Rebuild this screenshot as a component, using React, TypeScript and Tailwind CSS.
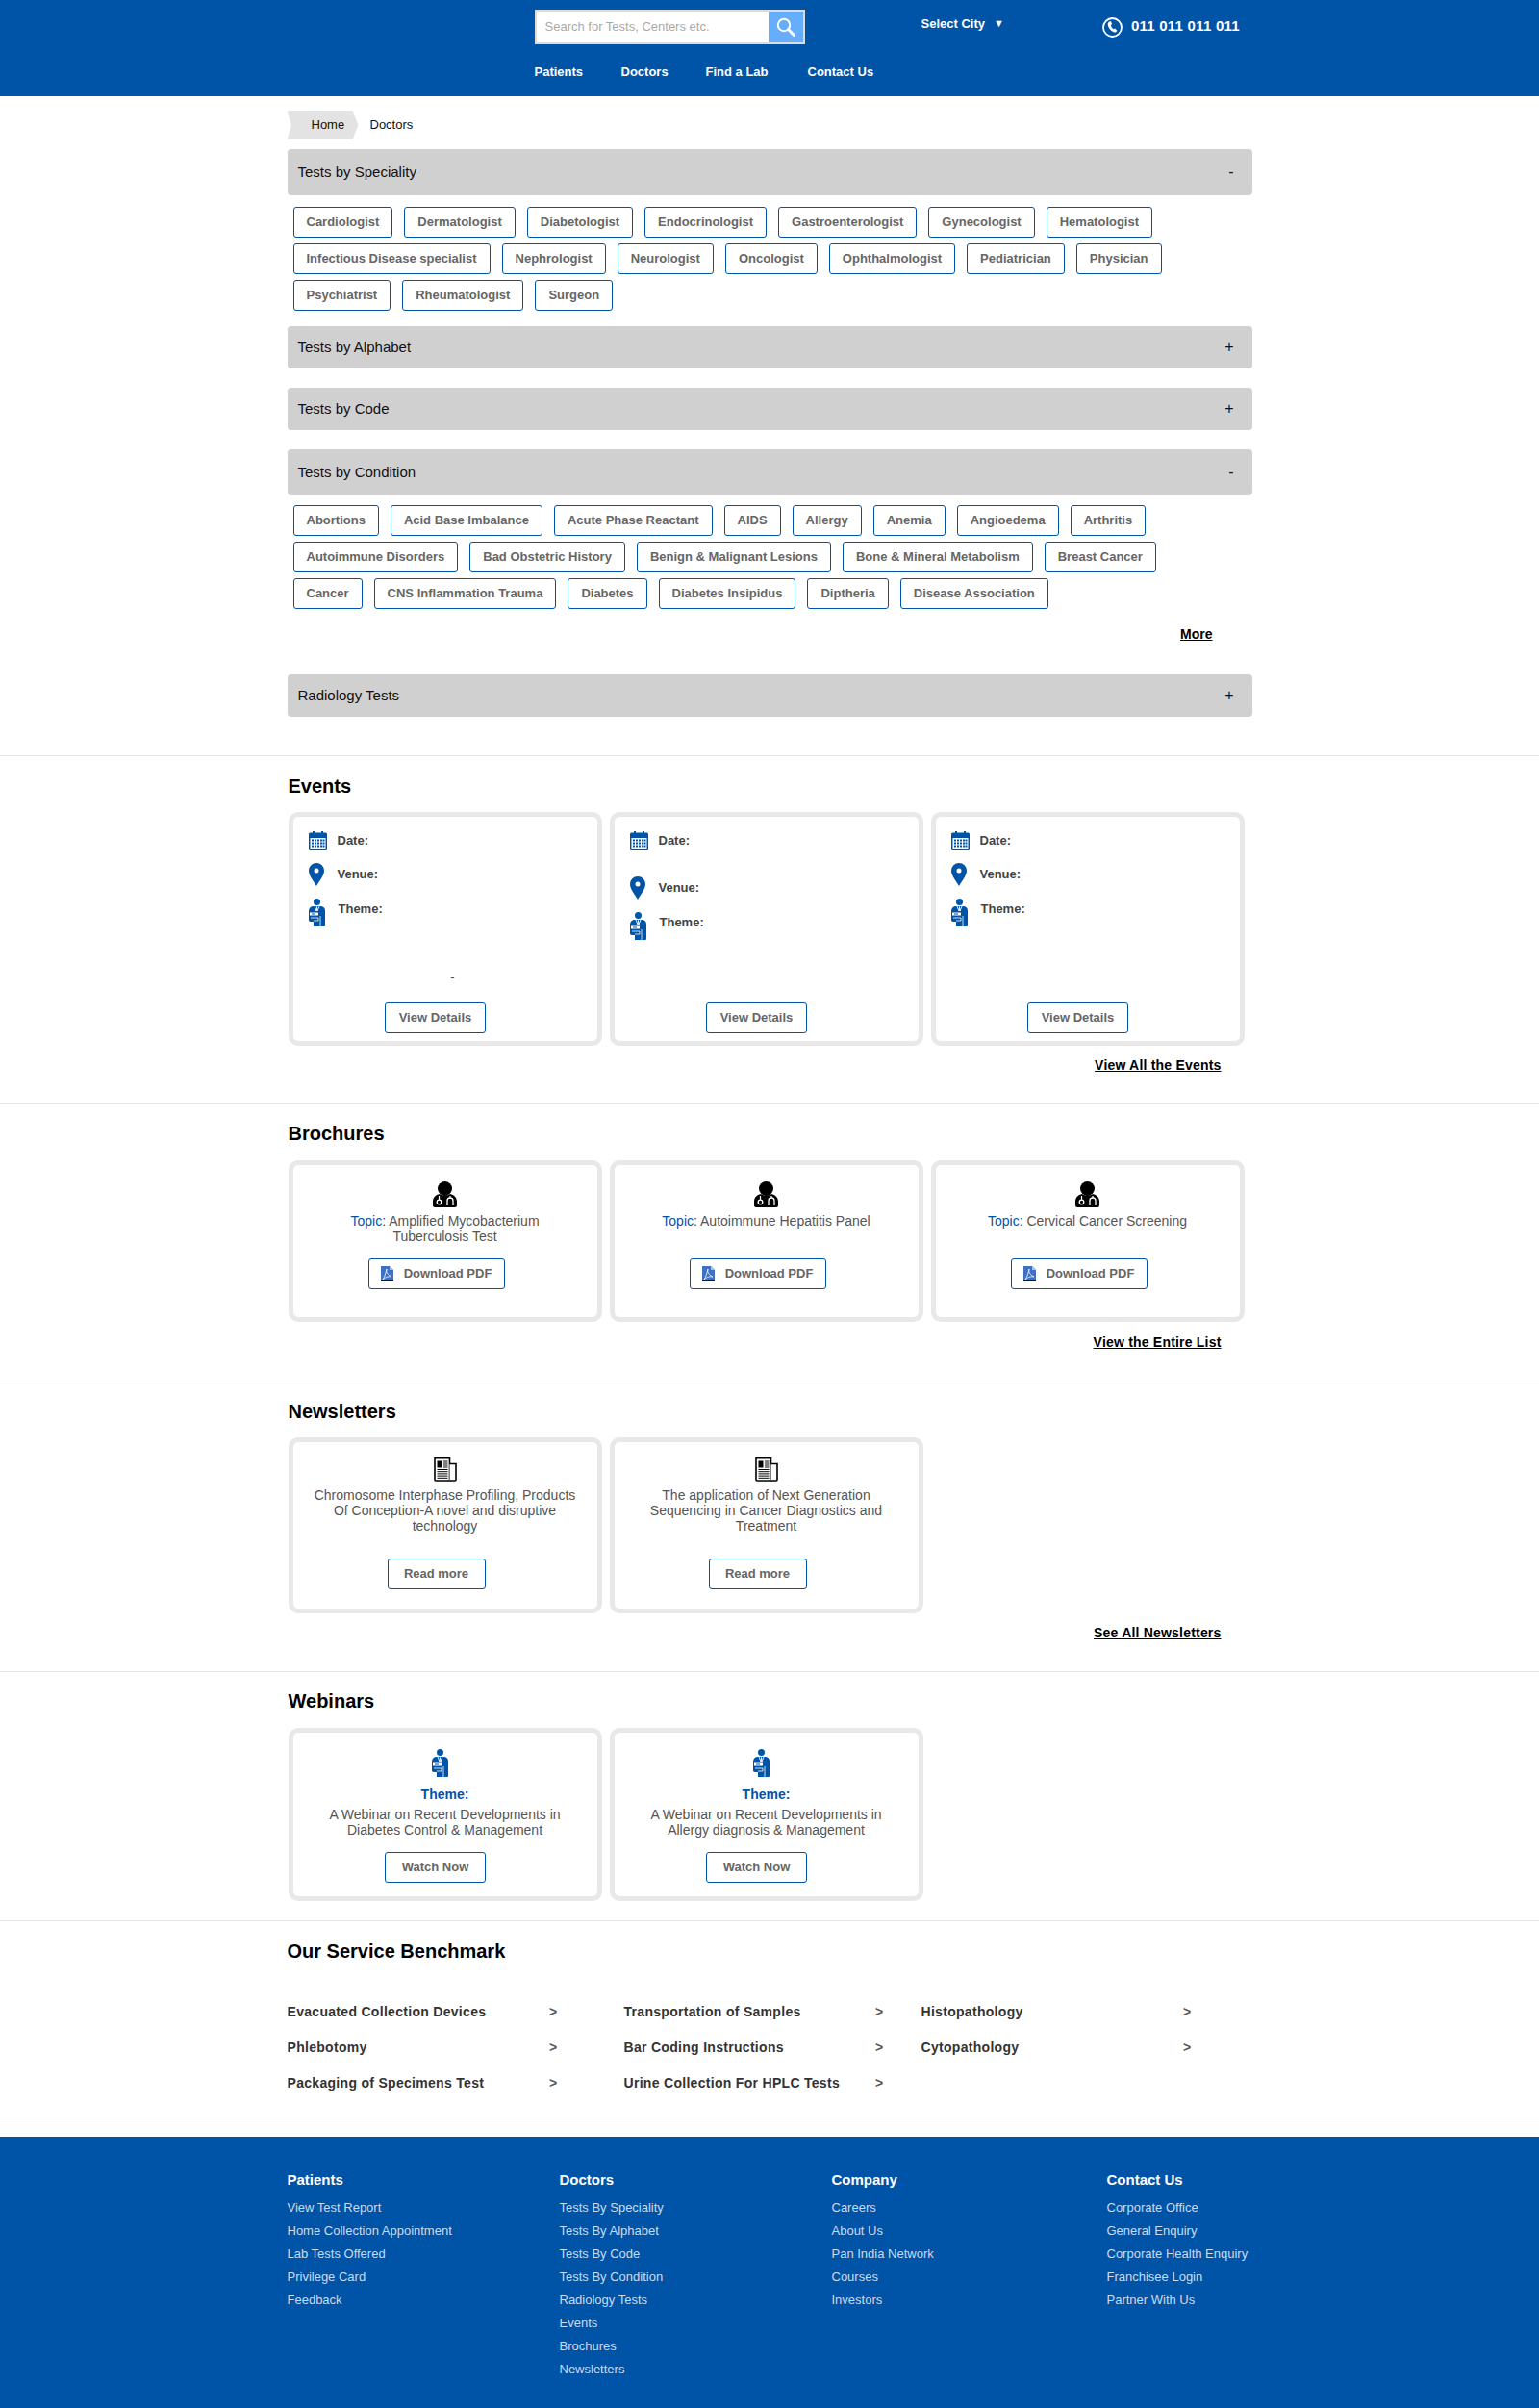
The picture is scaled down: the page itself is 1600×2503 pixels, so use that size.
import React from 'react';

const specialities = [
  ['Cardiologist', 'Dermatologist', 'Diabetologist', 'Endocrinologist', 'Gastroenterologist', 'Gynecologist', 'Hematologist'],
  ['Infectious Disease specialist', 'Nephrologist', 'Neurologist', 'Oncologist', 'Ophthalmologist', 'Pediatrician', 'Physician'],
  ['Psychiatrist', 'Rheumatologist', 'Surgeon'],
];

const conditions = [
  ['Abortions', 'Acid Base Imbalance', 'Acute Phase Reactant', 'AIDS', 'Allergy', 'Anemia', 'Angioedema', 'Arthritis'],
  ['Autoimmune Disorders', 'Bad Obstetric History', 'Benign & Malignant Lesions', 'Bone & Mineral Metabolism', 'Breast Cancer'],
  ['Cancer', 'CNS Inflammation Trauma', 'Diabetes', 'Diabetes Insipidus', 'Diptheria', 'Disease Association'],
];

const benchmark = [
  { cls: 'w-[350px]', row: 'w-[281px]', items: ['Evacuated Collection Devices', 'Phlebotomy', 'Packaging of Specimens Test'] },
  { cls: 'w-[309px]', row: 'w-[270px]', items: ['Transportation of Samples', 'Bar Coding Instructions', 'Urine Collection For HPLC Tests'] },
  { cls: 'w-[320px]', row: 'w-[281px]', items: ['Histopathology', 'Cytopathology'] },
];

const footer = [
  { title: 'Patients', cls: 'w-[283px]', links: ['View Test Report', 'Home Collection Appointment', 'Lab Tests Offered', 'Privilege Card', 'Feedback'] },
  { title: 'Doctors', cls: 'w-[283px]', links: ['Tests By Speciality', 'Tests By Alphabet', 'Tests By Code', 'Tests By Condition', 'Radiology Tests', 'Events', 'Brochures', 'Newsletters'] },
  { title: 'Company', cls: 'w-[286px]', links: ['Careers', 'About Us', 'Pan India Network', 'Courses', 'Investors'] },
  { title: 'Contact Us', cls: 'w-[150px]', links: ['Corporate Office', 'General Enquiry', 'Corporate Health Enquiry', 'Franchisee Login', 'Partner With Us'] },
];

/* Icons */
const MagnifierIcon = () => (
  <svg width="20" height="20" viewBox="0 0 20 20">
    <circle cx="8" cy="8" r="6.200" fill="none" stroke="#fff" strokeWidth="2" />
    <path d="M12.500 12.500L19 19" stroke="#fff" strokeWidth="3" strokeLinecap="round" />
  </svg>
);

const PhoneRingIcon = () => (
  <svg width="21" height="21" viewBox="0 0 21 21" className="shrink-0">
    <circle cx="10.500" cy="10.500" r="9.500" fill="none" stroke="#fff" strokeWidth="1.800" />
    <path d="M7.300 4.500L8.800 4l1.400 3-1.300 1c.3 1.700 1.300 3.300 2.800 4.300l1.400-.9 2.300 2.300-1 1.300c-.6.500-1.300.6-2 .4C8.700 14.300 6.200 11 5.700 7.300c-.1-1.200.5-2.300 1.600-2.800z" fill="#fff" />
  </svg>
);

const CalendarIcon = () => (
  <svg width="19" height="21" viewBox="0 0 19 21" className="shrink-0">
    <path d="M1.500 2.500H4V1h2v1.500h7V1h2v1.500h2.500A1.500 1.500 0 0 1 19 4v15.500a1.500 1.500 0 0 1-1.500 1.500h-16A1.500 1.500 0 0 1 0 19.500V4a1.500 1.500 0 0 1 1.500-1.500z" fill="#0054a8" />
    <rect x="1.500" y="8" width="16" height="11.500" fill="#fff" />
    {[9.5, 12.5, 15.5].map((y) =>
      [3, 6, 9, 12, 14.5].map((x) => <rect key={`${x}-${y}`} x={x} y={y} width="2" height="2" fill="#0054a8" />),
    )}
  </svg>
);

const PinIcon = () => (
  <svg width="16" height="24" viewBox="0 0 16 24" className="shrink-0">
    <path fillRule="evenodd" d="M8 0a8 8 0 0 1 8 8c0 5-5 11-8 16C5 19 0 13 0 8a8 8 0 0 1 8-8zm0 5.500a2.500 2.500 0 1 0 0 5 2.500 2.500 0 0 0 0-5z" fill="#0054a8" />
  </svg>
);

const PersonIcon = () => (
  <svg width="17" height="29" viewBox="0 0 17 29" className="shrink-0">
    <circle cx="8.500" cy="3.500" r="3.500" fill="#0054a8" />
    <path d="M4 8h9c2.500.5 4 2 4 4.500V28a1 1 0 0 1-1 1H5v-5H2c-1.500 0-2-1-2-2v-9c0-3 2-4.500 4-5z" fill="#0054a8" />
    <path d="M6 8l2 5 .5-4.500L9 13l2-5" stroke="#fff" strokeWidth=".9" fill="none" />
    <rect x="1" y="14.500" width="9" height="3" fill="#fff" />
    <rect x="3" y="15.500" width="4" height="1" fill="#0054a8" />
    <path d="M12 18v11" stroke="#fff" strokeWidth=".8" />
    <path d="M2 20h8v3H5" stroke="#fff" strokeWidth=".8" fill="none" />
  </svg>
);

const DoctorIcon = () => (
  <svg width="25" height="27" viewBox="0 0 25 27">
    <circle cx="12.500" cy="7.500" r="7.500" fill="#000" />
    <path d="M7 13c2 2 9 2 11 0 4 1 7 3.500 7 8v4a2 2 0 0 1-2 2H2a2 2 0 0 1-2-2v-4c0-4.500 3-7 7-8z" fill="#000" />
    <path d="M6.500 15v4" stroke="#fff" strokeWidth="1.200" />
    <circle cx="6.500" cy="21.500" r="2.300" fill="none" stroke="#fff" strokeWidth="1.300" />
    <path d="M15 25v-5a3 3 0 0 1 6 0v5" fill="none" stroke="#fff" strokeWidth="1.300" />
    <path d="M18 15v2" stroke="#fff" strokeWidth="1.200" />
  </svg>
);

const PdfIcon = () => (
  <svg width="13" height="16" viewBox="0 0 13 16" className="shrink-0">
    <path d="M0 0h9l4 4v12H0z" fill="#3f70c4" />
    <path d="M0 14.500h13V16H0z" fill="#0b1a3a" />
    <path d="M9 0v4h4z" fill="#a9c1ea" />
    <path d="M6 3c-1 3 1 6 5 8-3-.5-6 0-9 3 2-3 3-7 4-11z" fill="none" stroke="#fff" strokeWidth=".8" />
  </svg>
);

const NewspaperIcon = () => (
  <svg width="24" height="25" viewBox="0 0 24 25">
    <path d="M1 .8h15.500V24H2a1 1 0 0 1-1-1z" fill="#fff" stroke="#000" strokeWidth="1.600" />
    <path d="M16.500 6.500h6.500V23a1 1 0 0 1-1 1h-5.500" fill="#fff" stroke="#000" strokeWidth="1.600" />
    <rect x="3.500" y="3.500" width="5" height="7" fill="#000" />
    <path d="M10 4h4.500M10 6h4.500M10 8h4.500M10 10h4.500M3.500 12.500h11M3.500 14.700h11M3.500 16.900h11M3.500 19.100h11M3.500 21.300h11" stroke="#000" strokeWidth="1" />
  </svg>
);

/* Small pieces */
const Chip = ({ label }: { label: string }) => (
  <span className="h-8 px-[13px] flex items-center bg-white border border-[#0054a8] rounded-[3px] text-[13px] font-bold text-[#666]">
    {label}
  </span>
);

const ChipRows = ({ rows }: { rows: string[][] }) => (
  <div className="pl-[6px] flex flex-col gap-[6px]">
    {rows.map((row) => (
      <div key={row[0]} className="flex gap-x-3">
        {row.map((c) => <Chip key={c} label={c} />)}
      </div>
    ))}
  </div>
);

const OutlineButton = ({ className, children }: { className: string; children: React.ReactNode }) => (
  <button className={`h-8 flex items-center justify-center bg-white border border-[#0054a8] rounded-[3px] text-[13px] font-bold text-[#666] ${className}`}>
    {children}
  </button>
);

const AccordionBar = ({ title, sign, tall }: { title: string; sign: string; tall?: boolean }) => (
  <div className={`flex items-center justify-between pl-[11px] pr-[19px] bg-[#d0d0d0] rounded-[4px] text-[15px] text-[#111] ${tall ? 'h-12' : 'h-11'}`}>
    <span>{title}</span>
    <span className="text-[16px]">{sign}</span>
  </div>
);

const Heading = ({ children }: { children: React.ReactNode }) => (
  <h2 className="pl-px text-[20px] leading-6 font-bold text-black">{children}</h2>
);

const SideLink = ({ children }: { children: React.ReactNode }) => (
  <div className="flex justify-end pr-8 text-[14px] leading-4 tracking-[0.2px] font-bold text-black underline">{children}</div>
);

const Card = ({ className, children }: { className: string; children: React.ReactNode }) => (
  <div className={`w-[326px] flex flex-col bg-white border-[5px] border-[#e8e8e8] rounded-[10px] ${className}`}>{children}</div>
);

const EventCard = ({ venueGap, dash }: { venueGap: string; dash?: boolean }) => (
  <Card className="h-[243px]">
    <div className="pl-4 pt-[14px] text-[13px] font-bold text-[#444]">
      <div className="flex items-center">
        <div className="w-[30px]"><CalendarIcon /></div>
        <span>Date:</span>
      </div>
      <div className={`flex items-center ${venueGap}`}>
        <div className="w-[30px]"><PinIcon /></div>
        <span>Venue:</span>
      </div>
      <div className="flex items-center mt-[13px]">
        <div className="w-[31px]"><PersonIcon /></div>
        <span className="pb-[7px]">Theme:</span>
      </div>
      {dash && <div className="mt-[45px] text-center leading-4 font-normal">-</div>}
    </div>
    <div className="mt-auto pb-2 pr-5 flex justify-center">
      <OutlineButton className="w-[105px]">View Details</OutlineButton>
    </div>
  </Card>
);

const BrochureCard = ({ topic }: { topic: string }) => (
  <Card className="h-[168px] items-center">
    <div className="mt-[17px]"><DoctorIcon /></div>
    <p className="mt-[6px] h-8 w-full px-[30px] text-center text-[14px] leading-4 text-[#555]">
      <span className="text-[#0054a8]">Topic:</span> {topic}
    </p>
    <div className="mt-[15px] w-full pr-[18px] flex justify-center">
      <OutlineButton className="w-[142px]">
        <PdfIcon />
        <span className="ml-[11px]">Download PDF</span>
      </OutlineButton>
    </div>
  </Card>
);

const NewsletterCard = ({ text }: { text: string }) => (
  <Card className="h-[183px] items-center">
    <div className="mt-4"><NewspaperIcon /></div>
    <p className="mt-[6px] h-12 w-full px-[15px] text-center text-[14px] leading-4 text-[#555]">{text}</p>
    <div className="mt-[26px] w-full pr-[18px] flex justify-center">
      <OutlineButton className="w-[102px]">Read more</OutlineButton>
    </div>
  </Card>
);

const WebinarCard = ({ text }: { text: string }) => (
  <Card className="h-[180px] items-center">
    <div className="mt-[17px] pr-[11px]"><PersonIcon /></div>
    <div className="mt-[10px] text-[14px] leading-4 font-bold text-[#0054a8]">Theme:</div>
    <p className="mt-[5px] h-8 w-full px-5 text-center text-[14px] leading-4 text-[#555]">{text}</p>
    <div className="mt-[15px] w-full pr-5 flex justify-center">
      <OutlineButton className="w-[105px]">Watch Now</OutlineButton>
    </div>
  </Card>
);

export default function App() {
  return (
    <div className="w-[1600px] h-[2503px] bg-white font-['Liberation_Sans',Arial,sans-serif]">
      {/* Header */}
      <header className="h-[100px] bg-[#0054a8]">
        <div className="w-[1003px] mx-auto pl-[257px] pt-[10px] text-white">
          <div className="flex">
            <div className="w-[281px] h-9 flex border-2 border-[#dcdcdc] bg-white">
              <input
                placeholder="Search for Tests, Centers etc."
                className="flex-1 min-w-0 pl-[9px] text-[13px] outline-none placeholder:text-[#aaa]"
              />
              <div className="w-9 flex items-center justify-center bg-[#66aefb]">
                <MagnifierIcon />
              </div>
            </div>
            <div className="ml-[121px] mt-[7px] text-[13px] leading-4 font-bold">Select City</div>
            <div className="ml-[9px] mt-[6px] text-[11px] leading-4">▼</div>
            <div className="ml-[102px] mt-2"><PhoneRingIcon /></div>
            <div className="ml-[9px] mt-2 text-[15px] leading-[18px] tracking-[0.25px] font-bold">011 011 011 011</div>
          </div>
          <nav className="mt-[21px] flex text-[13px] leading-4 font-bold">
            <span className="w-[90px]">Patients</span>
            <span className="w-[88px]">Doctors</span>
            <span className="w-[106px]">Find a Lab</span>
            <span>Contact Us</span>
          </nav>
        </div>
      </header>

      {/* Breadcrumb and accordions */}
      <div className="w-[1003px] mx-auto pt-[15px]">
        <div className="flex items-center h-[30px] text-[13px] text-[#111]">
          <span className="w-[74px] h-full pl-[25px] flex items-center bg-[#e3e3e3] [clip-path:polygon(0_0,92%_0,100%_50%,92%_100%,0_100%,6%_50%)]">
            Home
          </span>
          <span className="ml-3">Doctors</span>
        </div>

        <div className="mt-[10px]"><AccordionBar title="Tests by Speciality" sign="-" tall /></div>
        <div className="mt-3"><ChipRows rows={specialities} /></div>

        <div className="mt-4"><AccordionBar title="Tests by Alphabet" sign="+" /></div>
        <div className="mt-5"><AccordionBar title="Tests by Code" sign="+" /></div>
        <div className="mt-5"><AccordionBar title="Tests by Condition" sign="-" tall /></div>
        <div className="mt-[10px]"><ChipRows rows={conditions} /></div>
        <div className="mt-[18px] pr-[41px] flex justify-end text-[14px] leading-4 font-bold text-black underline">More</div>
        <div className="mt-[34px]"><AccordionBar title="Radiology Tests" sign="+" /></div>
      </div>

      {/* Events */}
      <section className="mt-10 border-t border-[#e5e5e5] pt-[19px] pb-8">
        <div className="w-[1003px] mx-auto">
          <Heading>Events</Heading>
          <div className="mt-[15px] pl-px flex gap-2">
            <EventCard venueGap="mt-[13px]" dash />
            <EventCard venueGap="mt-[27px]" />
            <EventCard venueGap="mt-[13px]" />
          </div>
          <div className="mt-3"><SideLink>View All the Events</SideLink></div>
        </div>
      </section>

      {/* Brochures */}
      <section className="border-t border-[#e5e5e5] pt-[18px] pb-8">
        <div className="w-[1003px] mx-auto">
          <Heading>Brochures</Heading>
          <div className="mt-4 pl-px flex gap-2">
            <BrochureCard topic="Amplified Mycobacterium Tuberculosis Test" />
            <BrochureCard topic="Autoimmune Hepatitis Panel" />
            <BrochureCard topic="Cervical Cancer Screening" />
          </div>
          <div className="mt-[13px]"><SideLink>View the Entire List</SideLink></div>
        </div>
      </section>

      {/* Newsletters */}
      <section className="border-t border-[#e5e5e5] pt-[19px] pb-8">
        <div className="w-[1003px] mx-auto">
          <Heading>Newsletters</Heading>
          <div className="mt-[15px] pl-px flex gap-2">
            <NewsletterCard text="Chromosome Interphase Profiling, Products Of Conception-A novel and disruptive technology" />
            <NewsletterCard text="The application of Next Generation Sequencing in Cancer Diagnostics and Treatment" />
          </div>
          <div className="mt-3"><SideLink>See All Newsletters</SideLink></div>
        </div>
      </section>

      {/* Webinars */}
      <section className="border-t border-[#e5e5e5] pt-[18px] pb-5">
        <div className="w-[1003px] mx-auto">
          <Heading>Webinars</Heading>
          <div className="mt-4 pl-px flex gap-2">
            <WebinarCard text="A Webinar on Recent Developments in Diabetes Control & Management" />
            <WebinarCard text="A Webinar on Recent Developments in Allergy diagnosis & Management" />
          </div>
        </div>
      </section>

      {/* Benchmark */}
      <section className="border-y border-[#e5e5e5] pt-[19px] pb-4">
        <div className="w-[1003px] mx-auto">
          <h2 className="text-[20px] leading-6 font-bold text-black">Our Service Benchmark</h2>
          <div className="mt-[33px] flex">
            {benchmark.map((col) => (
              <div key={col.items[0]} className={col.cls}>
                {col.items.map((item) => (
                  <div key={item} className={`h-[37px] flex items-center justify-between text-[14px] tracking-[0.3px] font-bold text-[#333] ${col.row}`}>
                    <span>{item}</span>
                    <span className="text-[#555]">&gt;</span>
                  </div>
                ))}
              </div>
            ))}
          </div>
        </div>
      </section>

      {/* Footer */}
      <footer className="mt-5 h-[282px] bg-[#0054a8]">
        <div className="w-[1003px] mx-auto pt-[35px] flex">
          {footer.map((col) => (
            <div key={col.title} className={col.cls}>
              <h3 className="text-[15px] leading-5 font-bold text-white">{col.title}</h3>
              <ul className="mt-[7px] text-[13px] text-[#c8dbf0]">
                {col.links.map((link) => (
                  <li key={link} className="h-6 leading-6 whitespace-nowrap">{link}</li>
                ))}
              </ul>
            </div>
          ))}
        </div>
      </footer>
    </div>
  );
}
